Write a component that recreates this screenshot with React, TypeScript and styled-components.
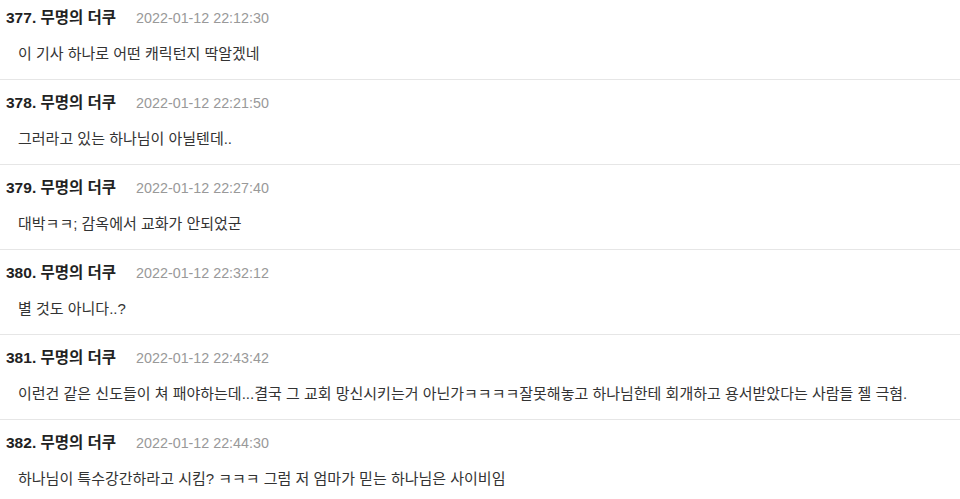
import React from 'react'
import styled, { createGlobalStyle } from 'styled-components'

const GlobalStyle = createGlobalStyle`
  html, body {
    margin: 0;
    padding: 0;
    background: #fff;
  }
  body {
    font-family: "Liberation Sans", "Noto Sans CJK KR", sans-serif;
    color: #333;
  }
`

interface Comment {
  no: number
  name: string
  date: string
  text: string
}

const comments: Comment[] = [
  { no: 377, name: '무명의 더쿠', date: '2022-01-12 22:12:30', text: '이 기사 하나로 어떤 캐릭턴지 딱알겠네' },
  { no: 378, name: '무명의 더쿠', date: '2022-01-12 22:21:50', text: '그러라고 있는 하나님이 아닐텐데..' },
  { no: 379, name: '무명의 더쿠', date: '2022-01-12 22:27:40', text: '대박ㅋㅋ; 감옥에서 교화가 안되었군' },
  { no: 380, name: '무명의 더쿠', date: '2022-01-12 22:32:12', text: '별 것도 아니다..?' },
  {
    no: 381,
    name: '무명의 더쿠',
    date: '2022-01-12 22:43:42',
    text: '이런건 같은 신도들이 쳐 패야하는데...결국 그 교회 망신시키는거 아닌가ㅋㅋㅋㅋ잘못해놓고 하나님한테 회개하고 용서받았다는 사람들 젤 극혐.',
  },
  { no: 382, name: '무명의 더쿠', date: '2022-01-12 22:44:30', text: '하나님이 특수강간하라고 시킴? ㅋㅋㅋ 그럼 저 엄마가 믿는 하나님은 사이비임' },
]

export default function App() {
  return (
    <>
      <GlobalStyle />
      <CommentList>
        {comments.map((c) => (
          <CommentItem key={c.no}>
            <CommentHeader>
              <Author>
                {c.no}. {c.name}
              </Author>
              <DateText>{c.date}</DateText>
            </CommentHeader>
            <CommentBody>{c.text}</CommentBody>
          </CommentItem>
        ))}
      </CommentList>
    </>
  )
}

const CommentList = styled.ul`
  list-style: none;
  margin: 0;
  padding: 0;
`
const CommentItem = styled.li`
  padding: 12px 6px 14px;
  border-bottom: 1px solid #e6e6e6;
  &:first-child {
    padding-top: 7px;
  }
`
const CommentHeader = styled.div`
  display: flex;
  align-items: baseline;
  gap: 20px;
  height: 22px;
  line-height: 22px;
`
const Author = styled.span`
  font-size: 15.5px;
  font-weight: 700;
  color: #222;
`
const DateText = styled.span`
  font-size: 14.3px;
  color: #999;
`
const CommentBody = styled.div`
  margin-top: 14px;
  padding-left: 12px;
  font-size: 15px;
  line-height: 22px;
  color: #333;
  white-space: nowrap;
`
